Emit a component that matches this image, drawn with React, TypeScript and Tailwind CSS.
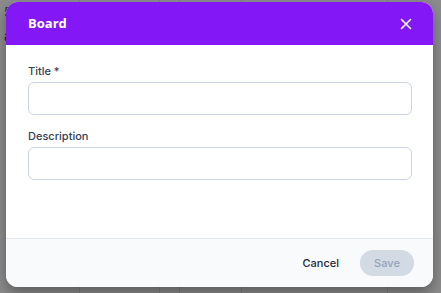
import React from "react";

function CloseIcon() {
  return (
    <svg width="12" height="12" viewBox="0 0 12 12" fill="none" stroke="currentColor" strokeWidth="1.6" strokeLinecap="round">
      <path d="M1.5 1.5l9 9M10.5 1.5l-9 9" />
    </svg>
  );
}

function Field({ label }: { label: string }) {
  return (
    <div className="flex flex-col gap-[4px]">
      <label className="text-[11px] font-medium leading-[14px] text-[#334155]">{label}</label>
      <input
        className="h-[33px] w-full rounded-[6px] border border-[#cbd5e1] bg-white px-3 text-[12px] outline-none"
        type="text"
      />
    </div>
  );
}

export default function App() {
  return (
    <div
      className="relative h-[293px] w-[441px] overflow-hidden bg-white"
      style={{ fontFamily: "Inter, 'Noto Sans', sans-serif" }}
    >
      {/* page behind the overlay */}
      <div className="flex h-full text-[13px] text-[#334155]">
        <div className="flex w-[80px] flex-col gap-1 border-r border-[#e2e8f0] px-1 pt-[3px]">
          <span>5 mi</span>
          <span>age</span>
        </div>
        <div className="w-[80px] border-r border-[#e2e8f0]" />
        <div className="w-[20px] border-r border-[#e2e8f0]" />
        <div className="w-[62px] border-r border-[#e2e8f0]" />
        <div className="flex flex-1 justify-center border-r border-[#e2e8f0] pt-[1px] text-[18px] tracking-wide">
          New Task
        </div>
        <div className="w-[53px]" />
      </div>

      <div className="absolute inset-0 bg-black/45 pl-[6px] pt-[2px]">
        <div className="flex h-[285px] w-[427px] flex-col overflow-hidden rounded-[12px] bg-white shadow-[0_6px_14px_rgba(0,0,0,0.35)]">
          <div className="flex h-[43px] shrink-0 items-center justify-between bg-[#8317f6] pl-[22px] pr-[21px] text-white">
            <span
              className="text-[13px] font-bold"
              style={{ fontFamily: "'Open Sans', Inter, sans-serif" }}
            >
              Board
            </span>
            <CloseIcon />
          </div>

          <div className="flex flex-1 flex-col gap-[14px] pl-[22px] pr-[21px] pt-[19px]">
            <Field label="Title *" />
            <Field label="Description" />
          </div>

          <div className="flex h-[49px] shrink-0 items-center justify-end gap-[21px] border-t border-[#e2e8f0] bg-[#f8fafc] pr-[19px]">
            <button className="text-[11px] font-medium text-[#1e293b]">Cancel</button>
            <button className="h-[26px] w-[54px] rounded-full bg-[#d2dae4] text-[11px] font-medium text-[#94a3b8]">
              Save
            </button>
          </div>
        </div>
      </div>
    </div>
  );
}
